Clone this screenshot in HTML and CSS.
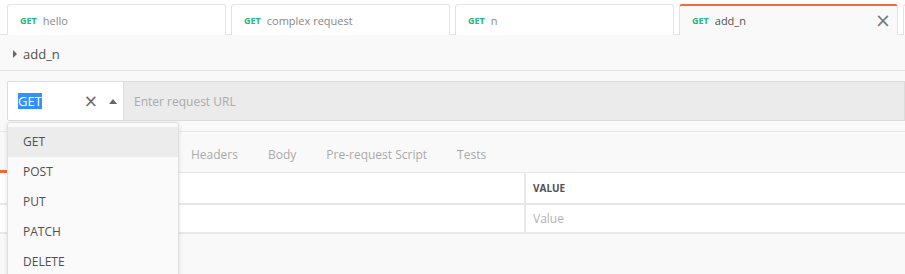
FILE: index.html
```html
<!DOCTYPE html>
<html lang="en">
<head>
  <meta charset="utf-8">
  <title>add_n</title>
  <link rel="stylesheet" href="styles.css">
</head>
<body>

  <div class="tabs">
    <div class="tab"><span class="verb">GET</span><span class="label">hello</span></div>
    <div class="tab"><span class="verb">GET</span><span class="label">complex request</span></div>
    <div class="tab"><span class="verb">GET</span><span class="label">n</span></div>
    <div class="tab active"><span class="verb">GET</span><span class="label">add_n</span><span class="close">&times;</span></div>
    <div class="tab"></div>
  </div>

  <div class="request-name">
    <span class="caret"></span>
    <span>add_n</span>
  </div>

  <div class="url-bar">
    <div class="method">
      <span class="selected">GET</span>
      <span class="clear">&times;</span>
      <span class="arrow"></span>
    </div>
    <div class="url">Enter request URL</div>
  </div>

  <div class="subnav">
    <div class="subtab active"></div>
    <div class="subtab">Headers</div>
    <div class="subtab">Body</div>
    <div class="subtab">Pre-request Script</div>
    <div class="subtab">Tests</div>
  </div>

  <div class="table">
    <div class="row head">
      <div class="cell key"></div>
      <div class="cell value">VALUE</div>
    </div>
    <div class="row">
      <div class="cell key"></div>
      <div class="cell value placeholder">Value</div>
    </div>
  </div>

  <!-- method dropdown, open -->
  <ul class="menu">
    <li class="hover">GET</li>
    <li>POST</li>
    <li>PUT</li>
    <li>PATCH</li>
    <li>DELETE</li>
  </ul>

</body>
</html>
```

FILE: styles.css
```css
* {
  margin: 0;
  padding: 0;
  box-sizing: border-box;
}

body {
  font-family: "Open Sans", "Liberation Sans", sans-serif;
  background: #f9f9f9;
  color: #505050;
  overflow: hidden;
  height: 274px;
  position: relative;
}

/* Request tabs */
.tabs {
  display: flex;
  gap: 5px;
  padding: 4px 0 0 7px;
  background: #fff;
  border-bottom: 1px solid #e3e3e3;
  height: 35px;
}

.tab {
  flex: 0 0 219px;
  height: 31px;
  margin-bottom: -1px;
  display: flex;
  align-items: center;
  padding: 0 6px 0 12px;
  background: #fff;
  border: 1px solid #e3e3e3;
  border-bottom: none;
  border-radius: 3px 3px 0 0;
}

.tab.active {
  background: #f9f9f9;
  border-top: 2px solid #f26b3a;
}

.verb {
  font-size: 9px;
  font-weight: 700;
  color: #26b47f;
  margin-right: 6px;
}

.label {
  font-size: 11px;
  color: #888;
}

.tab.active .label {
  color: #505050;
}

.close {
  margin-left: auto;
  font-size: 19px;
  line-height: 1;
  color: #777;
  font-family: "DejaVu Sans", sans-serif;
}

/* Request name */
.request-name {
  height: 36px;
  display: flex;
  align-items: center;
  padding: 3px 0 0 13px;
  font-size: 13px;
  border-bottom: 1px solid #e3e3e3;
}

.caret {
  width: 0;
  height: 0;
  border-top: 4px solid transparent;
  border-bottom: 4px solid transparent;
  border-left: 4px solid #666;
  margin-right: 6px;
}

/* URL bar */
.url-bar {
  display: flex;
  height: 40px;
  margin: 10px 0 0 7px;
}

.method {
  width: 117px;
  display: flex;
  align-items: center;
  padding-left: 10px;
  background: #fff;
  border: 1px solid #dcdcdc;
  border-radius: 2px 0 0 2px;
}

.selected {
  font-size: 13px;
  line-height: 16px;
  background: #3390ff;
  color: #fff;
}

.clear {
  margin-left: 42px;
  font-size: 17px;
  color: #666;
  font-family: "DejaVu Sans", sans-serif;
}

.arrow {
  margin-left: 11px;
  width: 0;
  height: 0;
  border-left: 4px solid transparent;
  border-right: 4px solid transparent;
  border-bottom: 5px solid #666;
}

.url {
  flex: 1;
  display: flex;
  align-items: center;
  padding-left: 10px;
  background: #ebebeb;
  border: 1px solid #dcdcdc;
  border-left: none;
  font-size: 12px;
  color: #aaa;
}

/* Sub tabs */
.subnav {
  display: flex;
  height: 42px;
  margin-top: 10px;
  border-top: 1px solid #e6e6e6;
  border-bottom: 1px solid #e6e6e6;
}

.subtab {
  padding: 6px 15px 0;
  display: flex;
  align-items: center;
  font-size: 12px;
  color: #aaa;
  border-bottom: 3px solid transparent;
  margin-bottom: -1px;
}

.subtab.active {
  width: 176px;
  border-bottom-color: #f26b3a;
}

/* Params table */
.table {
  background: #fff;
}

.row {
  display: flex;
  height: 29px;
  border-bottom: 2px solid #e8e8e8;
}

.row.head {
  height: 32px;
}

.cell {
  display: flex;
  align-items: center;
}

.cell.key {
  width: 526px;
  border-right: 2px solid #e8e8e8;
}

.cell.value {
  flex: 1;
  padding-left: 7px;
}

.head .value {
  font-size: 10px;
  font-weight: 700;
  color: #505050;
}

.placeholder {
  font-size: 12px;
  color: #b3b3b3;
}

/* Open method menu */
.menu {
  position: absolute;
  left: 7px;
  top: 122px;
  width: 172px;
  padding-top: 4px;
  list-style: none;
  background: #fafafa;
  border: 1px solid #e0e0e0;
  border-radius: 3px;
  box-shadow: 0 1px 4px rgba(0, 0, 0, 0.12);
}

.menu li {
  height: 30px;
  line-height: 30px;
  padding-left: 15px;
  font-size: 12px;
  color: #505050;
}

.menu li.hover {
  background: #ececec;
}
```
